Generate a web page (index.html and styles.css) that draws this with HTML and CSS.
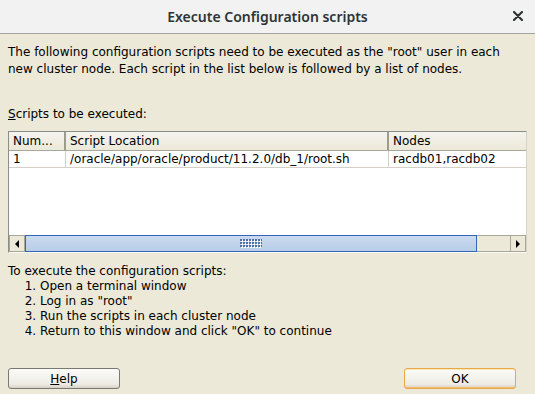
FILE: index.html
```html
<!DOCTYPE html>
<html lang="en">
<head>
    <meta charset="UTF-8">
    <title>Execute Configuration scripts</title>
    <link rel="stylesheet" href="styles.css">
</head>
<body>
    <div class="titlebar">
        <span class="title">Execute Configuration scripts</span>
        <svg class="close" width="10" height="10" viewBox="0 0 10 10">
            <path d="M1 1 L9 9 M9 1 L1 9" stroke="#2e3436" stroke-width="2.2" stroke-linecap="round"/>
        </svg>
    </div>

    <div class="content">
        <p class="intro">The following configuration scripts need to be executed as the "root" user in each<br>new cluster node. Each script in the list below is followed by a list of nodes.</p>

        <div class="list-label"><u>S</u>cripts to be executed:</div>

        <div class="table-box">
            <div class="table-head">
                <div class="cell col-num">Num...</div>
                <div class="cell col-loc">Script Location</div>
                <div class="cell col-nodes">Nodes</div>
            </div>
            <div class="table-row">
                <div class="cell col-num">1</div>
                <div class="cell col-loc">/oracle/app/oracle/product/11.2.0/db_1/root.sh</div>
                <div class="cell col-nodes">racdb01,racdb02</div>
            </div>
            <div class="table-empty"></div>
            <div class="hscroll">
                <div class="arrow arrow-left"><span></span></div>
                <div class="thumb"><div class="grip"></div></div>
                <div class="track"></div>
                <div class="arrow arrow-right"><span></span></div>
            </div>
        </div>

        <div class="steps">
            <div>To execute the configuration scripts:</div>
            <ol>
                <li>Open a terminal window</li>
                <li>Log in as "root"</li>
                <li>Run the scripts in each cluster node</li>
                <li>Return to this window and click "OK" to continue</li>
            </ol>
        </div>

        <div class="buttons">
            <button class="btn"><u>H</u>elp</button>
            <button class="btn btn-default">OK</button>
        </div>
    </div>
</body>
</html>
```

FILE: styles.css
```css
body {
    margin: 0;
    width: 535px;
    height: 394px;
    overflow: hidden;
    background-color: #ece9d8;
    font-family: "DejaVu Sans", sans-serif;
    font-size: 12px;
    color: #000;
}
.titlebar {
    height: 33px;
    background-color: #f2f2f2;
    border-bottom: 1px solid #a4a4a0;
    display: flex;
    align-items: center;
    justify-content: center;
    position: relative;
}
.title {
    font-family: "Noto Sans", sans-serif;
    font-weight: 600;
    font-size: 14px;
    color: #2e3436;
}
.close {
    position: absolute;
    right: 12px;
    top: 11px;
}
.content {
    padding: 0 8px;
}
.intro {
    margin: 10px 0 0;
    line-height: 17px;
}
.list-label {
    margin-top: 28px;
    line-height: 17px;
}
.table-box {
    margin-top: 8px;
    border: 1px solid #8c8c88;
    border-right-color: #d6d3c6;
    border-bottom-color: #fbfaf5;
    background-color: #fff;
    width: 517px;
}
.table-head,
.table-row {
    display: flex;
}
.table-head {
    height: 18px;
    background: linear-gradient(#f4f3ee, #ece9d8);
    border-bottom: 1px solid #a9a799;
}
.table-head .cell {
    border-right: 2px solid #9d9b8d;
}
.table-row {
    height: 16px;
    border-bottom: 1px solid #d4d0c8;
}
.table-row .cell {
    border-right: 1px solid #d4d0c8;
}
.cell {
    box-sizing: border-box;
    padding-left: 4px;
    line-height: 16px;
    white-space: nowrap;
    overflow: hidden;
}
.table-head .cell {
    line-height: 18px;
}
.col-num { width: 57px; }
.col-loc { width: 323px; }
.col-nodes { width: 137px; }
.table-head .col-nodes { border-right: none; }
.table-row .col-nodes { border-right: none; }
.table-empty {
    height: 67px;
}
.hscroll {
    display: flex;
    height: 17px;
    background-color: #ece9d8;
}
.arrow {
    width: 16px;
    box-sizing: border-box;
    border: 1px solid #a9a799;
    background-color: #ece9d8;
    display: flex;
    align-items: center;
    justify-content: center;
}
.arrow span {
    width: 0;
    height: 0;
    border-top: 4px solid transparent;
    border-bottom: 4px solid transparent;
}
.arrow-left span { border-right: 4px solid #000; }
.arrow-right span { border-left: 4px solid #000; }
.thumb {
    width: 452px;
    box-sizing: border-box;
    border: 1px solid #3764b8;
    background: linear-gradient(#cbdaee, #b8cde8);
    display: flex;
    align-items: center;
    justify-content: center;
}
.grip {
    width: 22px;
    height: 9px;
    background-image:
        radial-gradient(circle at 1px 1px, #4a6ea8 0.7px, transparent 1px),
        radial-gradient(circle at 2px 2px, #ffffff 0.7px, transparent 1px);
    background-size: 3px 3px;
}
.track {
    flex: 1;
    border-top: 1px solid #a9a799;
    border-bottom: 1px solid #a9a799;
}
.steps {
    margin-top: 11px;
    line-height: 15px;
}
.steps ol {
    margin: 0;
    padding-left: 32px;
}
.buttons {
    display: flex;
    justify-content: space-between;
    margin-top: 29px;
}
.btn {
    width: 112px;
    height: 21px;
    font-family: "DejaVu Sans", sans-serif;
    font-size: 12px;
    color: #000;
    background: linear-gradient(#fbfbf8, #eeece4 80%, #d6d0c3);
    border: 1px solid #7a7a74;
    border-radius: 3px;
    padding: 0;
}
.btn-default {
    border-color: #e7a74a;
    box-shadow: inset 0 -1px 0 #f4c06b, inset 0 1px 0 #fde6b6;
    margin-right: 11px;
}
```
